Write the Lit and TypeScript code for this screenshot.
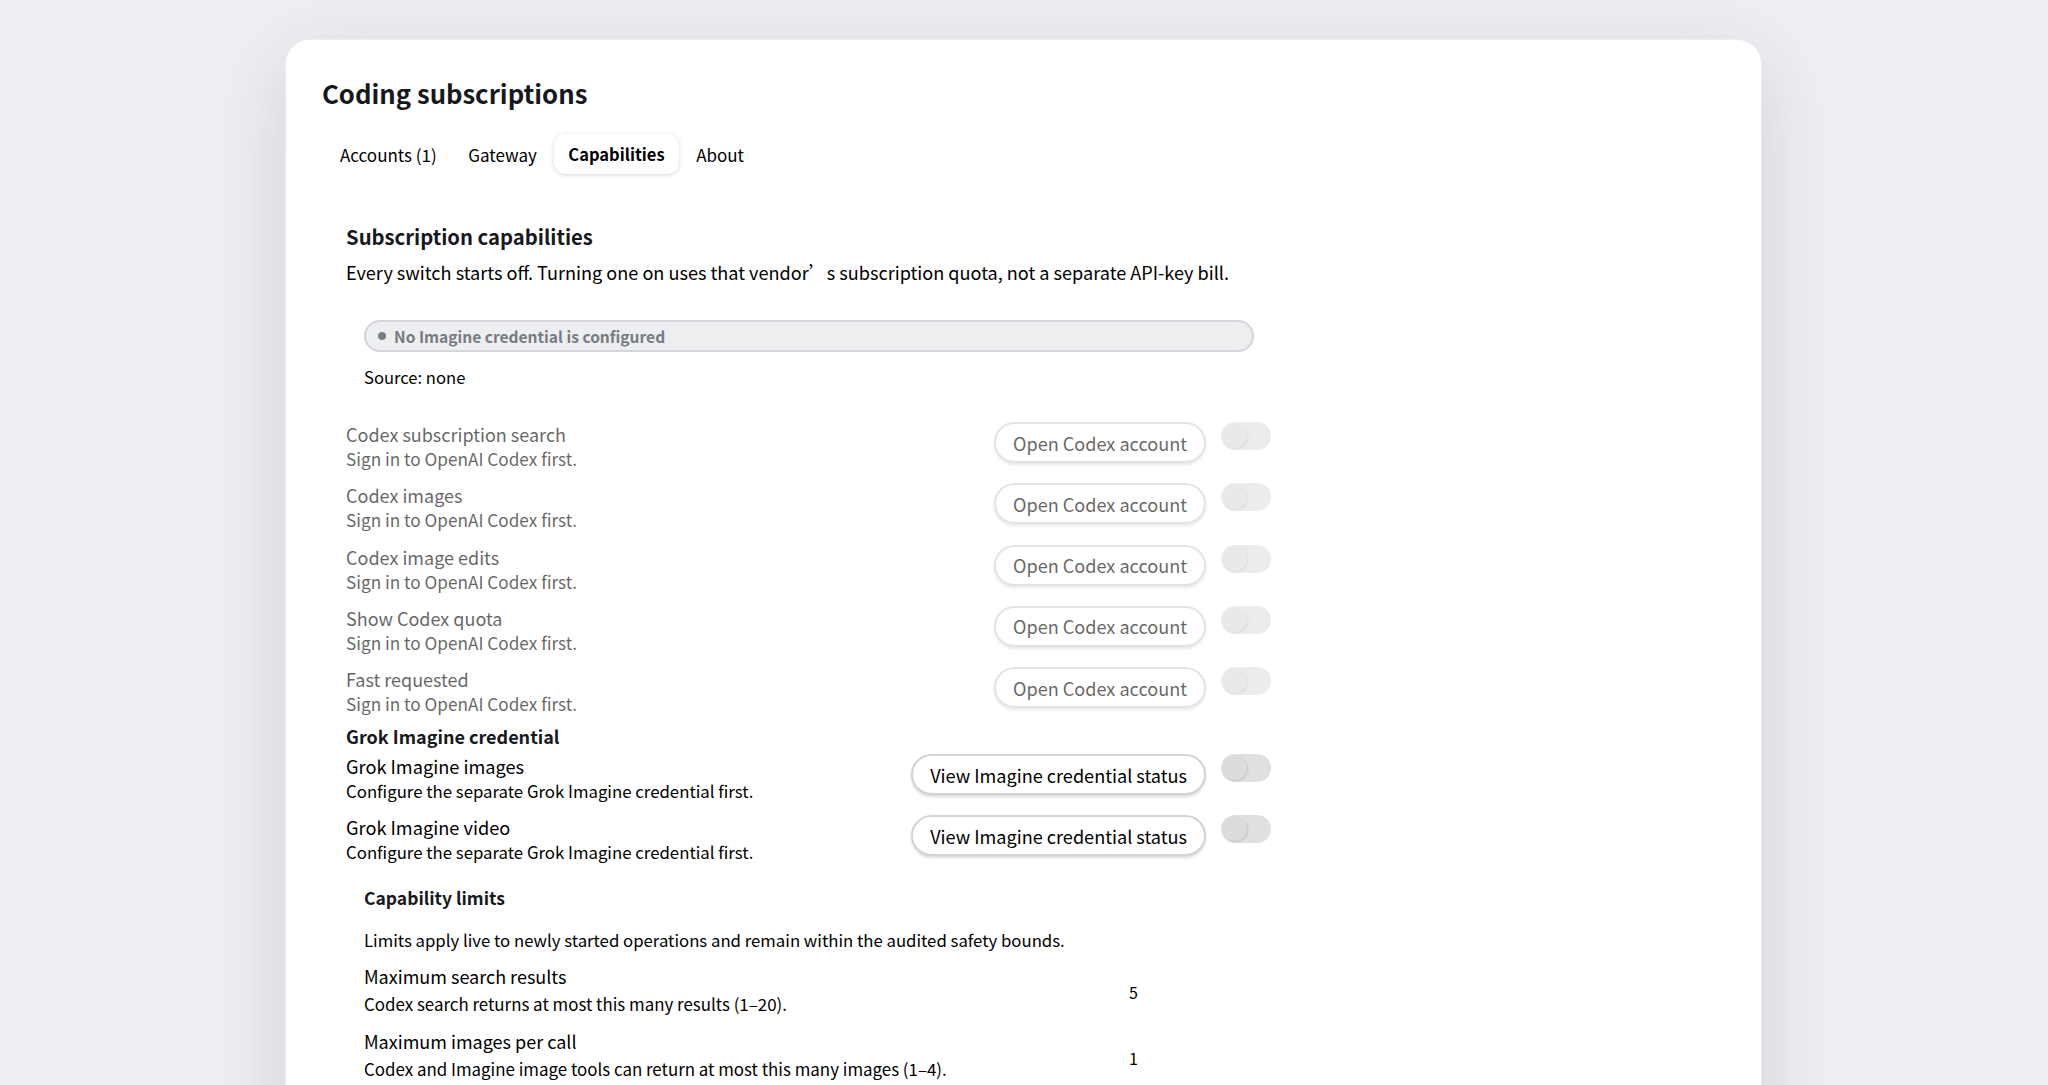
import { LitElement, css, html } from 'lit';
import { customElement } from 'lit/decorators.js';

const CODEX_ROWS = [
	'Codex subscription search',
	'Codex images',
	'Codex image edits',
	'Show Codex quota',
	'Fast requested',
];

const GROK_ROWS = ['Grok Imagine images', 'Grok Imagine video'];

@customElement('app-root')
export class AppRootElement extends LitElement {
	static styles = css`
		:host {
			display: block;
			height: 1085px;
			overflow: hidden;
			background: #eeeff3;
			color: #000;
			font-family: 'Noto Sans CJK SC', 'Noto Sans', sans-serif;
			font-size: 18px;
		}

		.card {
			box-sizing: border-box;
			width: 1475px;
			height: 1200px;
			margin: 40px 0 0 286px;
			padding: 34px 36px 0;
			background: #fff;
			border-radius: 24px;
			box-shadow:
				0 0 0 1px rgba(255, 255, 255, 0.3),
				0 20px 80px rgba(20, 40, 40, 0.15);
		}

		h1 {
			margin: 0;
			font-size: 25.7px;
			line-height: 38px;
			font-weight: 700;
			color: #16181d;
		}

		.tabs {
			display: flex;
			gap: 3.5px;
			margin: 22px 0 0 4px;
		}

		.tab {
			height: 40px;
			padding: 0 14px;
			display: flex;
			align-items: center;
			border-radius: 12px;
			font-size: 17px;
		}

		.tab.active {
			font-size: 16.5px;
			font-weight: 700;
			box-shadow: 0 1px 5px rgba(0, 0, 0, 0.16);
		}

		.content {
			width: 925px;
			margin: 49px 0 0 24px;
		}

		h2 {
			margin: 0;
			font-size: 20.25px;
			line-height: 28px;
			font-weight: 700;
			color: #16181d;
		}

		.lead {
			margin: 8px 0 0;
			font-size: 18.1px;
			line-height: 27px;
			white-space: nowrap;
		}

		.wide {
			font-family: 'Noto Sans CJK SC', sans-serif;
		}

		.status {
			margin: 34px 0 0 18px;
			width: 890px;
		}

		.pill {
			box-sizing: border-box;
			height: 32px;
			display: flex;
			align-items: center;
			gap: 8px;
			padding-left: 12px;
			border: 2px solid #d3d5d8;
			border-radius: 16px;
			background: #edeef0;
			color: #777b82;
			font-size: 15.55px;
			font-weight: 700;
		}

		.dot {
			width: 8px;
			height: 8px;
			border-radius: 50%;
			background: #7b7f85;
		}

		.source {
			margin-top: 13px;
			font-size: 16.6px;
			line-height: 24px;
		}

		.rows {
			display: flex;
			flex-direction: column;
			gap: 11.25px;
		}

		.rows.codex {
			margin-top: 32px;
		}

		.row {
			display: flex;
			align-items: flex-start;
			height: 50px;
		}

		.row.off {
			opacity: 0.6;
		}

		.text {
			flex-grow: 1;
		}

		.name {
			font-size: 18.2px;
			line-height: 26px;
		}

		.off .name {
			font-size: 18px;
		}

		.hint {
			font-size: 16.8px;
			line-height: 24px;
		}

		.off .hint {
			font-size: 17.2px;
		}

		.action {
			box-sizing: border-box;
			height: 41px;
			margin-top: 1px;
			padding: 0 17px;
			display: flex;
			align-items: center;
			border: 2px solid #d3d3d3;
			border-radius: 21px;
			background: #fff;
			box-shadow: 0 2px 3px rgba(0, 0, 0, 0.14);
			font-size: 18.1px;
			white-space: nowrap;
		}

		.switch {
			flex: none;
			width: 50px;
			height: 28px;
			margin: 1px 0 0 15px;
			border-radius: 14px;
			background: #e0e0e0;
		}

		.knob {
			width: 24px;
			height: 24px;
			margin-left: 2px;
			position: relative;
			top: 2px;
			border-radius: 50%;
			background: #dcdcdc;
			box-shadow: 1px 1px 2px rgba(0, 0, 0, 0.12);
		}

		h3 {
			margin: 7px 0 4px;
			font-size: 18px;
			line-height: 26px;
			font-weight: 700;
			color: #16181d;
		}

		.limits {
			margin: 21px 0 0 18px;
		}

		h4 {
			margin: 0;
			font-size: 17.5px;
			line-height: 26px;
			font-weight: 700;
			color: #16181d;
		}

		.note {
			margin: 16px 0 0;
			font-size: 16.75px;
			line-height: 26px;
			white-space: nowrap;
		}

		.limit {
			display: flex;
			margin-top: 9.5px;
			height: 56px;
		}

		.limit .text {
			flex: none;
			width: 765px;
		}

		.limit .name {
			font-size: 18px;
			line-height: 27px;
		}

		.limit .hint {
			font-size: 16.9px;
			line-height: 28px;
		}

		.value {
			align-self: center;
			margin-top: 3px;
			font-size: 16px;
		}
	`;

	renderToggle() {
		return html`<div class="switch"><div class="knob"></div></div>`;
	}

	renderRow(name: string, hint: string, action: string, off: boolean) {
		return html`
			<div class="row ${off ? 'off' : ''}">
				<div class="text">
					<div class="name">${name}</div>
					<div class="hint">${hint}</div>
				</div>
				<div class="action">${action}</div>
				${this.renderToggle()}
			</div>
		`;
	}

	render() {
		return html`
			<div class="card">
				<h1>Coding subscriptions</h1>
				<div class="tabs">
					<div class="tab">Accounts (1)</div>
					<div class="tab">Gateway</div>
					<div class="tab active">Capabilities</div>
					<div class="tab">About</div>
				</div>
				<div class="content">
					<h2>Subscription capabilities</h2>
					<p class="lead">
						Every switch starts off. Turning one on uses that vendor<span class="wide">’</span>s
						subscription quota, not a separate API-key bill.
					</p>
					<div class="status">
						<div class="pill">
							<span class="dot"></span>
							No Imagine credential is configured
						</div>
						<div class="source">Source: none</div>
					</div>
					<div class="rows codex">
						${CODEX_ROWS.map((name) =>
							this.renderRow(name, 'Sign in to OpenAI Codex first.', 'Open Codex account', true),
						)}
					</div>
					<h3>Grok Imagine credential</h3>
					<div class="rows">
						${GROK_ROWS.map((name) =>
							this.renderRow(
								name,
								'Configure the separate Grok Imagine credential first.',
								'View Imagine credential status',
								false,
							),
						)}
					</div>
					<div class="limits">
						<h4>Capability limits</h4>
						<p class="note">
							Limits apply live to newly started operations and remain within the audited safety
							bounds.
						</p>
						<div class="limit">
							<div class="text">
								<div class="name">Maximum search results</div>
								<div class="hint">Codex search returns at most this many results (1–20).</div>
							</div>
							<div class="value">5</div>
						</div>
						<div class="limit">
							<div class="text">
								<div class="name">Maximum images per call</div>
								<div class="hint">
									Codex and Imagine image tools can return at most this many images (1–4).
								</div>
							</div>
							<div class="value">1</div>
						</div>
					</div>
				</div>
			</div>
		`;
	}
}
